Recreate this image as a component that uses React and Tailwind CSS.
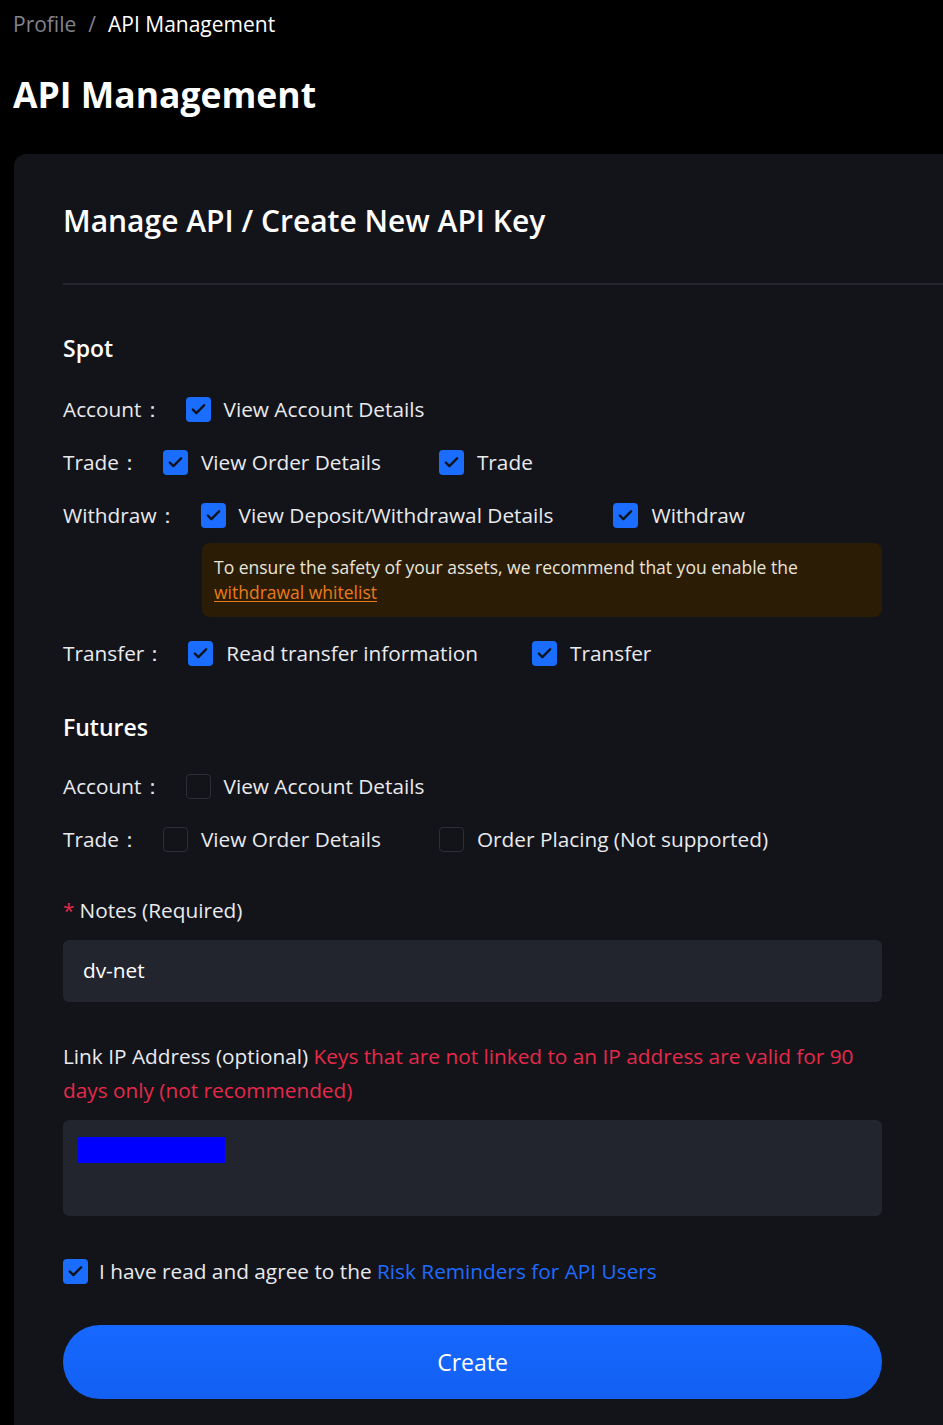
import { Check } from "lucide-react";

const Box = ({ checked }) => (
  <span
    className={
      checked
        ? "flex h-[25px] w-[25px] shrink-0 items-center justify-center rounded-[4px] bg-[#1a6dff]"
        : "h-[25px] w-[25px] shrink-0 rounded-[4px] border border-[#2c2e36]"
    }
  >
    {checked && <Check size={17} strokeWidth={3.4} className="text-[#10121a]" />}
  </span>
);

const Option = ({ checked, label, className = "" }) => (
  <label className={`flex items-center gap-[13px] ${className}`}>
    <Box checked={checked} />
    <span>{label}</span>
  </label>
);

const Row = ({ title, children }) => (
  <div className="flex h-[53px] items-center">
    <span className="mr-[23px]">{title}：</span>
    {children}
  </div>
);

export default function App() {
  return (
    <div
      className="min-h-screen overflow-hidden bg-black text-[#e9eaee]"
      style={{ fontFamily: '"Open Sans", "Noto Sans", sans-serif' }}
    >
      <div className="flex h-[50px] items-center pl-[13px] text-[21px]">
        <span className="text-[#80838c]">Profile</span>
        <span className="mx-[12px] text-[#80838c]">/</span>
        <span className="text-white">API Management</span>
      </div>
      <h1 className="flex h-[90px] items-center pl-[13px] text-[35.5px] font-bold text-white">
        API Management
      </h1>
      <div className="ml-[14px] mt-[14px] rounded-tl-xl bg-[#131419] pb-[30px] pl-[49px] text-[20.8px]">
        <div className="flex h-[131px] items-center border-b-2 border-[#25262e] pt-[4px]">
          <h2 className="text-[30px] font-semibold text-white">Manage API / Create New API Key</h2>
        </div>

        <div className="w-[819px]">
          <h3 className="mt-[46px] mb-[18px] text-[23px] font-semibold leading-[34px] text-white">Spot</h3>
          <Row title="Account">
            <Option checked label="View Account Details" />
          </Row>
          <Row title="Trade">
            <Option checked label="View Order Details" />
            <Option checked label="Trade" className="ml-[58px]" />
          </Row>
          <Row title="Withdraw">
            <Option checked label="View Deposit/Withdrawal Details" />
            <Option checked label="Withdraw" className="ml-[60px]" />
          </Row>
          <div className="ml-[139px] mt-[1px] rounded-lg bg-[#2b1d05] px-[12px] py-[12px] text-[17.5px] leading-[25px] text-[#e9e4da]">
            To ensure the safety of your assets, we recommend that you enable the
            <br />
            <a className="text-[#e97a1c] underline underline-offset-2">withdrawal whitelist</a>
          </div>
          <div className="mt-[10px]">
            <Row title="Transfer">
              <Option checked label="Read transfer information" />
              <Option checked label="Transfer" className="ml-[54px]" />
            </Row>
          </div>

          <h3 className="mt-[30px] mb-[16px] text-[23px] font-semibold leading-[34px] text-white">Futures</h3>
          <Row title="Account">
            <Option label="View Account Details" />
          </Row>
          <Row title="Trade">
            <Option label="View Order Details" />
            <Option label="Order Placing (Not supported)" className="ml-[58px]" />
          </Row>

          <div className="mt-[28px] flex items-center leading-[32px]">
            <span className="mr-[5px] text-[#e5294b]">*</span>
            <span>Notes (Required)</span>
          </div>
          <div className="mt-[14px] flex h-[62px] items-center rounded-md bg-[#22252e] px-[20px] text-white">
            dv-net
          </div>

          <p className="mt-[37px] leading-[34px]">
            Link IP Address (optional){" "}
            <span className="text-[#e5294b]">
              Keys that are not linked to an IP address are valid for 90 days only (not recommended)
            </span>
          </p>
          <div className="mt-[13px] h-[96px] rounded-md bg-[#22252e] px-[15px] pt-[17px]">
            <div className="h-[26px] w-[147px] bg-[#0000ff]" />
          </div>

          <div className="mt-[40px] flex items-center gap-[11px]">
            <Box checked />
            <span>
              I have read and agree to the{" "}
              <a className="text-[#1f6bff]">Risk Reminders for API Users</a>
            </span>
          </div>

          <button
            type="button"
            className="mt-[38px] flex h-[74px] w-full items-center justify-center rounded-full bg-gradient-to-b from-[#1668ff] to-[#1360f2] text-[23px] text-white"
          >
            Create
          </button>
        </div>
      </div>
    </div>
  );
}
